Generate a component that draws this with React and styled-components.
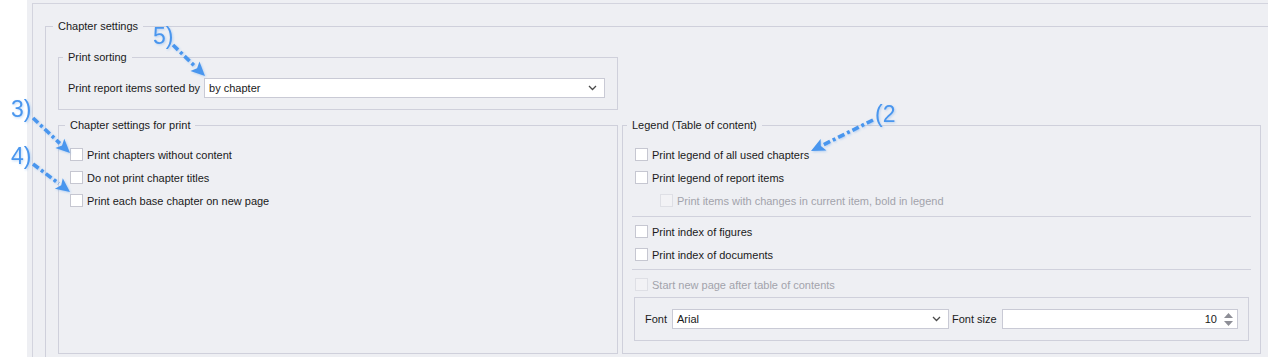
import React from "react";
import styled, { createGlobalStyle } from "styled-components";

const GlobalStyle = createGlobalStyle`
  html, body {
    margin: 0;
    padding: 0;
    background: #ffffff;
  }
  body {
    font-family: "Liberation Sans", Arial, sans-serif;
    font-size: 11px;
    color: #1a1a1a;
  }
`;

const Page = styled.div`
  position: relative;
  display: flex;
  width: 1268px;
  height: 357px;
  overflow: hidden;
`;

const Gutter = styled.div`
  width: 27px;
  flex-shrink: 0;
  background: #ffffff;
`;

const Panel = styled.div`
  flex: 1;
  display: flex;
  padding: 3px 0 0 5px;
  background: #eeeff3;
  overflow: hidden;
`;

const Frame = styled.div`
  flex: 1;
  display: flex;
  padding: 16px 0 0 12px;
  border-top: 1px solid #d3d4de;
  border-left: 1px solid #d3d4de;
`;

const Group = styled.fieldset`
  box-sizing: border-box;
  margin: 0;
  min-width: 0;
  border: 1px solid #cfd0db;
  padding: ${(p) => p.$pad || "0"};
  width: ${(p) => p.$width || "auto"};
  height: ${(p) => p.$height || "auto"};
  display: flex;
  flex-direction: column;
`;

const OuterGroup = styled(Group)`
  flex: 1;
  margin: -1px -12px -12px 0;
  height: auto;
`;

const Legend = styled.legend`
  margin-left: -5px;
  padding: 0 5px;
  line-height: 14px;
  font-size: 11px;
  color: #1a1a1a;
`;

const SideBySide = styled.div`
  display: flex;
  gap: 4px;
  margin-top: 8px;
`;

const FieldRow = styled.div`
  display: flex;
  align-items: center;
  gap: ${(p) => p.$gap || "5px"};
  height: 20px;
`;

const Label = styled.span`
  white-space: nowrap;
  margin-left: ${(p) => p.$ml || "0"};
`;

const Combo = styled.div`
  box-sizing: border-box;
  display: flex;
  align-items: center;
  justify-content: space-between;
  height: 20px;
  width: ${(p) => p.$width};
  padding: 0 7px 0 4px;
  background: #ffffff;
  border: 1px solid #c9cad5;
`;

const Spinner = styled(Combo)`
  flex: 1;
  padding: 0 4px 0 4px;
  justify-content: flex-end;
  gap: 7px;
`;

const SpinArrows = styled.div`
  display: flex;
  flex-direction: column;
  gap: 3px;
`;

const CheckRow = styled.label`
  display: flex;
  align-items: center;
  gap: 4px;
  height: 23px;
  padding-left: ${(p) => p.$indent || "0"};
  color: ${(p) => (p.$disabled ? "#a2a3ab" : "#1a1a1a")};
  white-space: nowrap;
`;

const Box = styled.span`
  box-sizing: border-box;
  width: 13px;
  height: 13px;
  flex-shrink: 0;
  background: ${(p) => (p.$disabled ? "#f2f2f5" : "#ffffff")};
  border: 1px solid ${(p) => (p.$disabled ? "#dedfe5" : "#c6c7d1")};
`;

const Separator = styled.div`
  height: 1px;
  background: #d0d1dc;
  margin: ${(p) => p.$top || "3px"} 0 3px;
`;

const CheckList = styled.div`
  display: flex;
  flex-direction: column;
  padding-left: ${(p) => p.$pl || "0"};
`;

const FontBox = styled.div`
  box-sizing: border-box;
  height: 44px;
  margin: 1px 2px 0;
  padding: 11px 10px;
  border: 1px solid #cfd0db;
`;

const Overlay = styled.svg`
  position: absolute;
  left: 0;
  top: 0;
  pointer-events: none;
`;

const Chevron = () => (
  <svg width="9" height="6" viewBox="0 0 9 6">
    <polyline points="1,1 4.5,4.5 8,1" fill="none" stroke="#4a4a4a" strokeWidth="1.3" />
  </svg>
);

const Check = ({ children, disabled, indent }) => (
  <CheckRow $disabled={disabled} $indent={indent}>
    <Box $disabled={disabled} />
    {children}
  </CheckRow>
);

const arrows = [
  { label: "5)", tx: 153, ty: 44, from: [173, 45], to: [205, 76] },
  { label: "3)", tx: 11, ty: 117, from: [33, 118], to: [70, 153] },
  { label: "4)", tx: 11, ty: 164, from: [33, 164], to: [70, 192] },
  { label: "(2", tx: 875, ty: 122, from: [873, 120], to: [811, 151] },
];

function Annotation({ label, tx, ty, from, to }) {
  const dx = to[0] - from[0];
  const dy = to[1] - from[1];
  const len = Math.hypot(dx, dy);
  const ux = dx / len;
  const uy = dy / len;
  const head = 14;
  const bx = to[0] - ux * head;
  const by = to[1] - uy * head;
  const px = -uy * 6.5;
  const py = ux * 6.5;
  return (
    <g filter="url(#glow)">
      <text x={tx} y={ty} fontFamily="Liberation Sans, Arial, sans-serif" fontSize="23" fill="#4a96ee">
        {label}
      </text>
      <line
        x1={from[0]}
        y1={from[1]}
        x2={bx}
        y2={by}
        stroke="#4a96ee"
        strokeWidth="3.6"
        strokeDasharray="7 3 3 3"
      />
      <polygon
        points={`${to[0]},${to[1]} ${bx + px},${by + py} ${bx + ux * 3},${by + uy * 3} ${bx - px},${by - py}`}
        fill="#4a96ee"
      />
    </g>
  );
}

export default function App() {
  return (
    <>
      <GlobalStyle />
      <Page>
        <Gutter />
        <Panel>
          <Frame>
            <OuterGroup $pad="17px 0 0 12px">
              <Legend>Chapter settings</Legend>

              <Group $width="560px" $height="60px" $pad="14px 11px 0 9px">
                <Legend>Print sorting</Legend>
                <FieldRow $gap="4px">
                  <Label>Print report items sorted by</Label>
                  <Combo $width="401px">
                    <span>by chapter</span>
                    <Chevron />
                  </Combo>
                </FieldRow>
              </Group>

              <SideBySide>
                <Group $width="560px" $height="236px" $pad="11px 11px 0 11px">
                  <Legend>Chapter settings for print</Legend>
                  <CheckList>
                    <Check>Print chapters without content</Check>
                    <Check>Do not print chapter titles</Check>
                    <Check>Print each base chapter on new page</Check>
                  </CheckList>
                </Group>

                <Group $width="639px" $height="236px" $pad="11px 9px 0 9px">
                  <Legend>Legend (Table of content)</Legend>
                  <CheckList $pl="3px">
                    <Check>Print legend of all used chapters</Check>
                    <Check>Print legend of report items</Check>
                    <Check disabled indent="25px">
                      Print items with changes in current item, bold in legend
                    </Check>
                  </CheckList>
                  <Separator $top="4px" />
                  <CheckList $pl="3px">
                    <Check>Print index of figures</Check>
                    <Check>Print index of documents</Check>
                  </CheckList>
                  <Separator />
                  <CheckList $pl="3px">
                    <Check disabled>Start new page after table of contents</Check>
                  </CheckList>
                  <FontBox>
                    <FieldRow $gap="5px">
                      <Label>Font</Label>
                      <Combo $width="277px">
                        <span>Arial</span>
                        <Chevron />
                      </Combo>
                      <Label $ml="-2px">Font size</Label>
                      <Spinner>
                        <span>10</span>
                        <SpinArrows>
                          <svg width="9" height="5" viewBox="0 0 9 5">
                            <polygon points="4.5,0 9,5 0,5" fill="#8d8e96" />
                          </svg>
                          <svg width="9" height="5" viewBox="0 0 9 5">
                            <polygon points="0,0 9,0 4.5,5" fill="#8d8e96" />
                          </svg>
                        </SpinArrows>
                      </Spinner>
                    </FieldRow>
                  </FontBox>
                </Group>
              </SideBySide>
            </OuterGroup>
          </Frame>
        </Panel>

        <Overlay width="1268" height="357" viewBox="0 0 1268 357">
          <defs>
            <filter id="glow" x="-20%" y="-20%" width="140%" height="140%">
              <feDropShadow dx="1" dy="1" stdDeviation="1.2" floodColor="#4a96ee" floodOpacity="0.35" />
            </filter>
          </defs>
          {arrows.map((a) => (
            <Annotation key={a.label} {...a} />
          ))}
        </Overlay>
      </Page>
    </>
  );
}
